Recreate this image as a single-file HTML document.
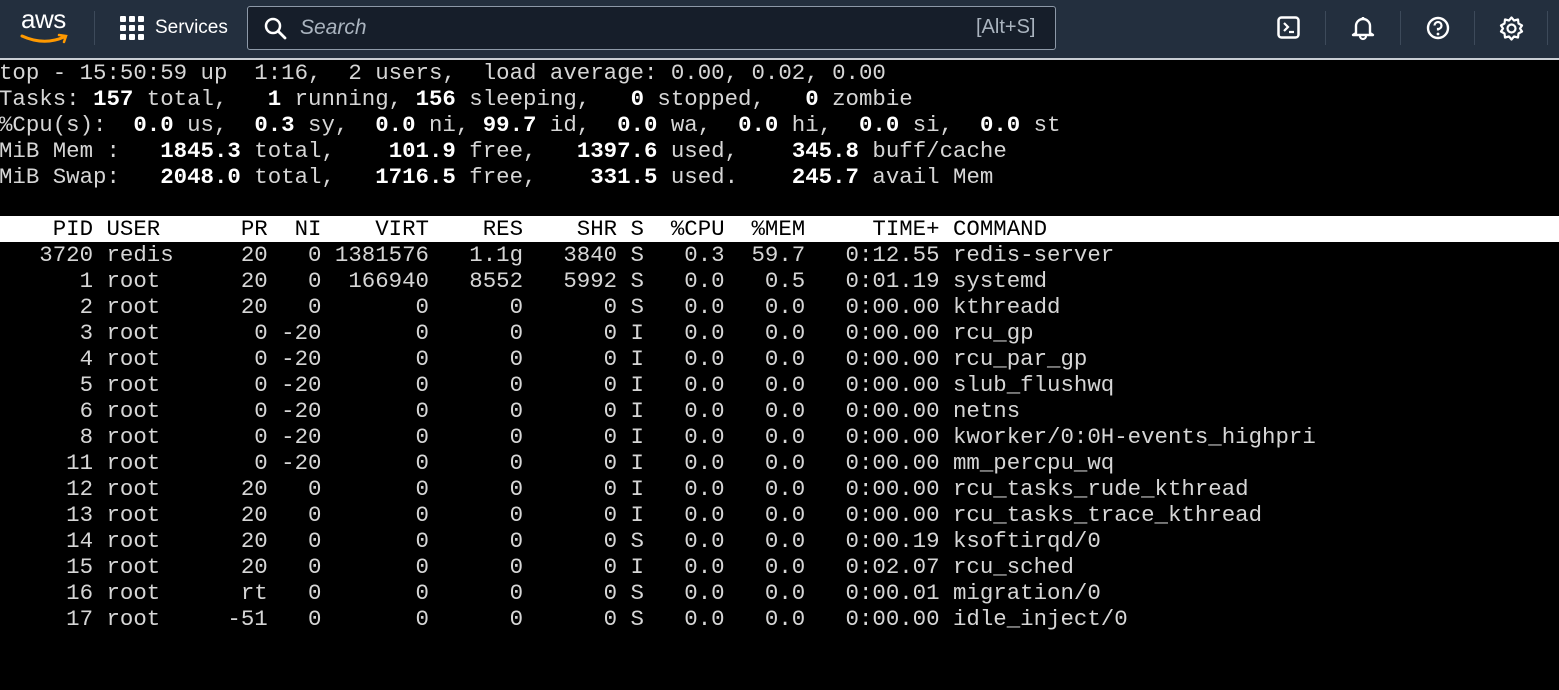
<!DOCTYPE html>
<html><head><meta charset="utf-8"><style>
html,body{margin:0;padding:0;width:1559px;height:690px;overflow:hidden;background:#000;}
.hdr{position:absolute;left:0;top:0;width:1559px;height:58px;background:#232f3e;border-bottom:2px solid #c9ced4;font-family:"Liberation Sans",sans-serif;}
.sep{position:absolute;top:11px;width:1px;height:34px;background:#3d4a5a;}
.term{position:absolute;left:-1px;top:60px;font-family:"Liberation Mono",monospace;font-size:22.4px;line-height:26px;color:#d6d6d6;white-space:pre;}
.term b{color:#fff;}
.hl{background:#fff;color:#000;width:1562px;display:block;margin-left:-2px;padding-left:2px;}
</style></head><body>
<div class="hdr">
  <div style="position:absolute;left:21px;top:4px;color:#fff;font-size:26px;letter-spacing:-0.5px;">aws</div>
  <svg style="position:absolute;left:20px;top:33px" width="50" height="12"><path d="M2 3 Q24 13 44 4" stroke="#ff9900" stroke-width="3" fill="none" stroke-linecap="round"/><path d="M39 2 L46 3 L44 9" stroke="#ff9900" stroke-width="2.5" fill="none" stroke-linecap="round"/></svg>
  <div class="sep" style="left:94px"></div>
  <svg style="position:absolute;left:120px;top:16px" width="26" height="25" fill="#fff"><rect x="0" y="0" width="6" height="6" rx="1"/><rect x="9" y="0" width="6" height="6" rx="1"/><rect x="18" y="0" width="6" height="6" rx="1"/><rect x="0" y="9" width="6" height="6" rx="1"/><rect x="9" y="9" width="6" height="6" rx="1"/><rect x="18" y="9" width="6" height="6" rx="1"/><rect x="0" y="18" width="6" height="6" rx="1"/><rect x="9" y="18" width="6" height="6" rx="1"/><rect x="18" y="18" width="6" height="6" rx="1"/></svg>
  <div style="position:absolute;left:155px;top:17px;color:#fff;font-size:19px;">Services</div>
  <div style="position:absolute;left:247px;top:6px;width:807px;height:42px;border:1px solid #8d99a8;border-radius:3px;background:#161e2a;"></div>
  <svg style="position:absolute;left:264px;top:17px" width="24" height="24"><circle cx="9" cy="9" r="7" stroke="#fff" stroke-width="2.5" fill="none"/><path d="M14 14 L21 21" stroke="#fff" stroke-width="2.8" stroke-linecap="round"/></svg>
  <div style="position:absolute;left:300px;top:16px;color:#aab4bf;font-size:21px;font-style:italic;">Search</div>
  <div style="position:absolute;left:976px;top:16px;color:#aab4bf;font-size:20px;">[Alt+S]</div>
  <svg style="position:absolute;left:1277px;top:16px" width="24" height="24"><rect x="1.5" y="1.5" width="20" height="20" rx="3" stroke="#fff" stroke-width="2.5" fill="none"/><path d="M7 7 L11 11 L7 15 M12 16 L17 16" stroke="#fff" stroke-width="2.2" fill="none"/></svg>
  <div class="sep" style="left:1325px"></div>
  <svg style="position:absolute;left:1350px;top:15px" width="26" height="26"><path d="M13 2 V4 M6 18 V11 A7 7 0 0 1 20 11 V18 L23 20 H3 Z" stroke="#fff" stroke-width="2.4" fill="none" stroke-linejoin="round"/><path d="M10 21 A3 3 0 0 0 16 21" stroke="#fff" stroke-width="2.2" fill="none"/></svg>
  <div class="sep" style="left:1400px"></div>
  <svg style="position:absolute;left:1426px;top:16px" width="25" height="25"><circle cx="12" cy="12" r="10" stroke="#fff" stroke-width="2.4" fill="none"/><path d="M8.5 9.5 A3.5 3.5 0 1 1 12 13 V14.5" stroke="#fff" stroke-width="2.2" fill="none"/><circle cx="12" cy="18" r="1.4" fill="#fff"/></svg>
  <div class="sep" style="left:1474px"></div>
  <svg style="position:absolute;left:1499px;top:16px" width="25" height="25"><path d="M12.5 1.5 L15 4.5 L19 3.5 L19.5 7.5 L23 9.5 L21 12.5 L23 15.5 L19.5 17.5 L19 21.5 L15 20.5 L12.5 23.5 L10 20.5 L6 21.5 L5.5 17.5 L2 15.5 L4 12.5 L2 9.5 L5.5 7.5 L6 3.5 L10 4.5 Z" stroke="#fff" stroke-width="2.2" fill="none" stroke-linejoin="round"/><circle cx="12.5" cy="12.5" r="4" stroke="#fff" stroke-width="2.2" fill="none"/></svg>
  <div class="sep" style="left:1547px"></div>
</div>
<div class="term">top - 15:50:59 up  1:16,  2 users,  load average: 0.00, 0.02, 0.00
Tasks: <b>157</b> total,   <b>1</b> running, <b>156</b> sleeping,   <b>0</b> stopped,   <b>0</b> zombie
%Cpu(s):  <b>0.0</b> us,  <b>0.3</b> sy,  <b>0.0</b> ni, <b>99.7</b> id,  <b>0.0</b> wa,  <b>0.0</b> hi,  <b>0.0</b> si,  <b>0.0</b> st
MiB Mem :   <b>1845.3</b> total,    <b>101.9</b> free,   <b>1397.6</b> used,    <b>345.8</b> buff/cache
MiB Swap:   <b>2048.0</b> total,   <b>1716.5</b> free,    <b>331.5</b> used.    <b>245.7</b> avail Mem

<span class="hl">    PID USER      PR  NI    VIRT    RES    SHR S  %CPU  %MEM     TIME+ COMMAND</span>   3720 redis     20   0 1381576   1.1g   3840 S   0.3  59.7   0:12.55 redis-server
      1 root      20   0  166940   8552   5992 S   0.0   0.5   0:01.19 systemd
      2 root      20   0       0      0      0 S   0.0   0.0   0:00.00 kthreadd
      3 root       0 -20       0      0      0 I   0.0   0.0   0:00.00 rcu_gp
      4 root       0 -20       0      0      0 I   0.0   0.0   0:00.00 rcu_par_gp
      5 root       0 -20       0      0      0 I   0.0   0.0   0:00.00 slub_flushwq
      6 root       0 -20       0      0      0 I   0.0   0.0   0:00.00 netns
      8 root       0 -20       0      0      0 I   0.0   0.0   0:00.00 kworker/0:0H-events_highpri
     11 root       0 -20       0      0      0 I   0.0   0.0   0:00.00 mm_percpu_wq
     12 root      20   0       0      0      0 I   0.0   0.0   0:00.00 rcu_tasks_rude_kthread
     13 root      20   0       0      0      0 I   0.0   0.0   0:00.00 rcu_tasks_trace_kthread
     14 root      20   0       0      0      0 S   0.0   0.0   0:00.19 ksoftirqd/0
     15 root      20   0       0      0      0 I   0.0   0.0   0:02.07 rcu_sched
     16 root      rt   0       0      0      0 S   0.0   0.0   0:00.01 migration/0
     17 root     -51   0       0      0      0 S   0.0   0.0   0:00.00 idle_inject/0</div>
</body></html>
